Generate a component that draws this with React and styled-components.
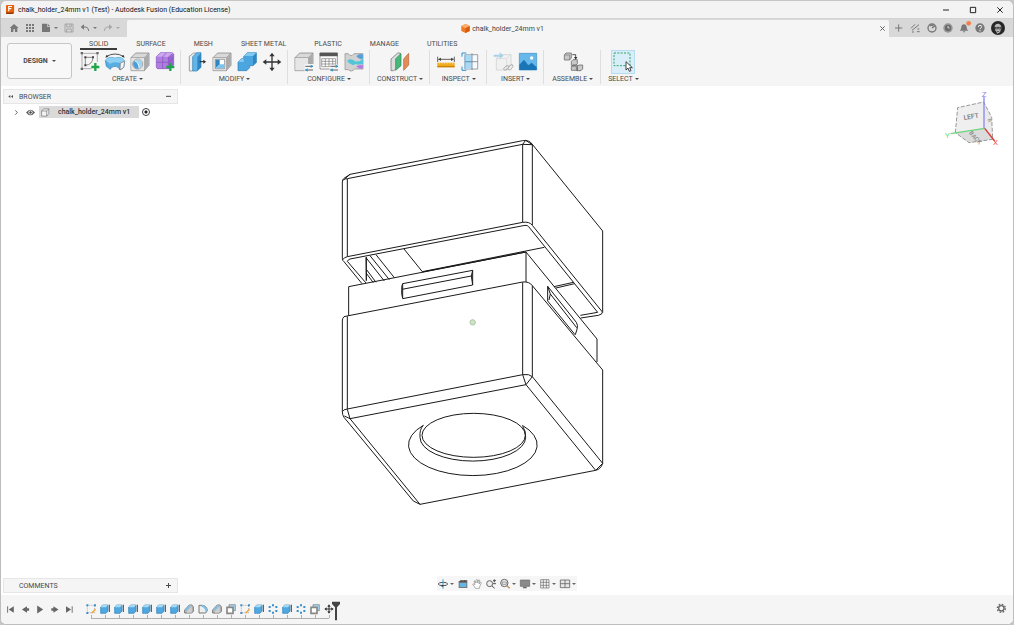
import React, { useState } from 'react';
import styled, { createGlobalStyle } from 'styled-components';

const GlobalStyle = createGlobalStyle`
    * { box-sizing:border-box; }
    body {
        margin:0;
        background-color:#c6c6c6;
        font-family:Roboto, "Liberation Sans", sans-serif;
        font-size:7px;
        line-height:10px;
        color:#4a4a4a;
    }
    button {
        display:flex;
        align-items:center;
        justify-content:center;
        margin:0;
        padding:0;
        border:0;
        background:none;
        font:inherit;
        color:inherit;
    }
    svg { display:block; flex:none; overflow:visible; }
`;

const Window = styled.div`
    display:flex;
    flex-direction:column;
    min-height:100vh;
    padding-top:1px;
    background-color:#c6c6c6;
`;
const Frame = styled.div`
    display:flex;
    flex:1;
    flex-direction:column;
    overflow:hidden;
    border:1px solid #bdbdbd;
    border-top:0;
    border-radius:6px;
    background-color:#fff;
`;
const TitleBar = styled.header`
    display:flex;
    align-items:center;
    height:18px;
    padding-left:5px;
    border-bottom:1px solid #d2d2d2;
    background-color:#f3f3f3;
`;
const WindowTitle = styled.h1`
    flex:1;
    margin:0 0 0 3px;
    font-size:7px;
    font-weight:400;
    line-height:10px;
    color:#111;
`;
const WindowButton = styled.button`
    width:27px;
    height:16px;
`;

const FileBar = styled.div`
    display:flex;
    height:18px;
    background-color:#d8d8d8;
`;
const QuickAccess = styled.nav`
    display:flex;
    align-items:center;
    gap:6px;
    width:126px;
    padding-left:8px;
    color:#777;
`;
const QuickButton = styled.button`
    gap:3px;
    height:16px;
    opacity:${({ $off }) => ($off ? 0.5 : 1)};
`;
const DocTab = styled.div`
    display:flex;
    flex:1;
    align-items:center;
    margin-top:1px;
    padding-right:3px;
    border-radius:2px 2px 0 0;
    background-color:#f5f5f5;
`;
const DocName = styled.div`
    display:flex;
    flex:1;
    align-items:center;
    justify-content:center;
    gap:2px;
    color:#444;
`;
const CloseTab = styled.button`
    width:8px;
    height:8px;
    color:#666;
`;
const Account = styled.div`
    display:flex;
    align-items:center;
    gap:6px;
    padding:0 8px 0 6px;
    color:#777;
`;

const Ribbon = styled.div`
    display:flex;
    height:49px;
    background-color:#f5f5f5;
`;
const Workspace = styled.button`
    gap:4px;
    width:65px;
    height:36px;
    margin:6px 2px 0 6px;
    border:1px solid #c6c6c6;
    border-radius:3px;
    background-color:#f8f8f8;
    font-weight:700;
`;
const RibbonMain = styled.div`
    display:flex;
    flex-direction:column;
`;
const Tabs = styled.div`
    display:flex;
    gap:10px;
    padding-left:6px;
`;
const Tab = styled.button`
    height:13px;
    padding:3px 9px 0;
    border-bottom:2px solid ${({ $active }) => ($active ? '#3c3c3c' : 'transparent')};
`;
const Groups = styled.div`
    display:flex;
`;
const Group = styled.section`
    display:flex;
    flex-direction:column;
    align-items:center;
    height:34px;
    min-width:57px;
    padding:0 5px 0 6px;
    border-right:1px solid #dedede;
    &:last-child {
        min-width:0;
        border-right:0;
    }
`;
const Tools = styled.div`
    display:flex;
    gap:5px;
`;
const Tool = styled.button`
    width:${({ $selected }) => ($selected ? 24 : 20)}px;
    height:24px;
    background-color:${({ $selected }) => ($selected ? '#d9eef8' : 'transparent')};
    outline:${({ $selected }) => ($selected ? '1px solid #b5dcf0' : 'none')};
    outline-offset:-1px;
`;
const GroupLabel = styled.button`
    gap:2px;
    height:10px;
    padding:0 1px;
    white-space:nowrap;
`;
const Caret = styled.span`
    border:2px solid transparent;
    border-top-color:currentColor;
    border-bottom:0;
`;

/* every layer of the canvas shares the one grid cell */
const Canvas = styled.main`
    display:grid;
    flex:1;
    grid-template:minmax(0, 1fr) / minmax(0, 1fr);
    background-color:#fff;
    > * { grid-area:1 / 1; }
`;
const ModelLayer = styled.div`
    display:flex;
    align-items:flex-start;
    justify-content:center;
    padding:44px 64px 0 0;
`;
const CubeLayer = styled.div`
    align-self:start;
    justify-self:end;
`;
const Browser = styled.aside`
    align-self:start;
    width:175px;
    margin:3px 0 0 2px;
`;
const PanelHead = styled.div`
    display:flex;
    align-items:center;
    height:15px;
    padding:0 6px 0 3px;
    border:1px solid #e6e6e6;
    background-color:#f5f5f5;
`;
const PanelTitle = styled.h2`
    flex:1;
    margin:0 0 0 6px;
    font-size:7px;
    font-weight:400;
    line-height:10px;
`;
const PanelButton = styled.button`
    width:6px;
    height:10px;
`;
const TreeRow = styled.div`
    display:flex;
    align-items:center;
    height:12px;
    margin-top:2px;
    padding-left:10px;
`;
const TreeButton = styled.button`
    width:6px;
    height:10px;
    margin-right:6px;
`;
const EyeButton = styled.button`
    width:10px;
    height:10px;
    margin-right:4px;
`;
const NodeLabel = styled.label`
    display:flex;
    align-items:center;
    gap:8px;
    height:12px;
    padding:0 9px 0 2px;
    background-color:#dadada;
    font-weight:500;
    color:#333;
`;
const NodeRadio = styled.input`
    appearance:none;
    width:8px;
    height:8px;
    margin:0 0 0 3px;
    border:1px solid #444;
    border-radius:50%;
    background:radial-gradient(#222 0 1px, #fff 2px);
`;
const Comments = styled.aside`
    align-self:end;
    width:175px;
    margin:0 0 2px 2px;
`;
const NavBar = styled.nav`
    display:flex;
    align-items:center;
    align-self:end;
    justify-self:center;
    gap:4px;
    height:15px;
    margin-bottom:4px;
    padding:0 1px;
    background-color:#f6f6f6;
    color:#666;
`;
const NavButton = styled.button`
    gap:2px;
    height:13px;
`;

const Timeline = styled.footer`
    display:flex;
    align-items:flex-start;
    height:29px;
    padding:8px 6px 0 4px;
    background-color:#f5f5f5;
`;
const Player = styled.div`
    display:flex;
    gap:5px;
    color:#666;
`;
const PlayerButton = styled.button`
    width:10px;
    height:12px;
`;
const History = styled.div`
    display:flex;
    flex:1;
    padding-left:9px;
`;
const Steps = styled.ol`
    display:flex;
    flex-wrap:wrap;
    width:252px;
    margin:0 -4px 0 0;
    padding:0;
    list-style:none;
    &::after {
        content:"";
        width:100%;
        height:1px;
        margin:0 7px;
        background-color:#b0b0b0;
    }
`;
const Step = styled.li`
    display:flex;
    flex-direction:column;
    align-items:center;
    width:14px;
    &::after {
        content:"";
        width:1px;
        height:3px;
        background-color:#b0b0b0;
    }
`;
const StepButton = styled.button`
    width:12px;
    height:12px;
`;

const Art = ({ size = 20, box = 60, children, ...rest }) => (
    <svg width={size} height={size} viewBox={`0 0 ${box} ${box}`} fill="none" aria-hidden="true" {...rest}>
        {children}
    </svg>
);

const GreenPlus = () => <path d="M46 33v24M34 45h24" stroke="#21a54a" strokeWidth="7" />;
const GreyCube = () => (
    <>
        <path d="M3 17 17 3h40v37L43 56H3z" fill="#d9d9d9" stroke="#777" strokeWidth="2" strokeLinejoin="round" />
        <path d="M3 17h40v39M43 17 57 3" stroke="#8c8c8c" strokeWidth="2" />
        <path d="M44 18 56 6v34L44 54z" fill="#aaa" />
        <path d="M4 18h38v37H4z" fill="#e6e6e6" />
    </>
);

const toolArt = {
    sketch: (
        <>
            <path d="M6 4h46M6 4v46h28M52 4v26" stroke="#888" strokeWidth="2" />
            <path d="M2 0h7v7H2zM49 0h7v7h-7zM2 47h7v7H2z" fill="#666" />
            <path d="M16 16h23Q38 38 16 40z" stroke="#555" strokeWidth="2" />
            <path d="M13 13h6v6h-6zM36 13h6v6h-6zM13 37h6v6h-6z" fill="#444" />
            <GreenPlus />
        </>
    ),
    revolve: (
        <>
            <path d="M5 13Q30-1 55 13" stroke="#333" strokeWidth="2.5" />
            <path d="m1 17 4-9 5 6zM59 17l-9-3 5-6z" fill="#333" />
            <path d="M1 25q6-9 18-9 11 5 23 0 14 2 17 11l-3 19-11 8-5-8q-10-6-20 0l-4 6-12-9z" fill="#58aee2" stroke="#2a7fb8" strokeWidth="2" strokeLinejoin="round" />
            <path d="M1 25q6-9 18-9 11 5 23 0 14 2 17 11l-13 6q-16-5-31 2z" fill="#8dd0f4" />
            <path d="m46 33 13-5-3 18-11 8z" fill="#f5f5f5" stroke="#777" strokeWidth="2" />
        </>
    ),
    hole: (
        <>
            <GreyCube />
            <circle cx="23" cy="36" r="15" fill="#fff" stroke="#777" strokeWidth="2" />
            <path d="M12 27q13 2 14 23-14 2-17-14 0-5 3-9z" fill="#4a9fd8" />
            <path d="M13 27q14 1 16 22 8-5 8-14-2-13-15-12-6 1-9 4z" fill="#9fd5f3" />
        </>
    ),
    form: (
        <>
            <path d="M4 14 16 2h36l4 5v32L43 50H7l-3-5z" fill="#9a63d2" stroke="#8450bd" strokeWidth="2" strokeLinejoin="round" />
            <path d="M4 14 16 2h36l3 4-14 9z" fill="#cba5ef" />
            <path d="M5 15h35v34H7l-2-4z" fill="#ae7fde" />
            <path d="M5 31h35l15-14M23 15v34M23 15 34 2M40 15v34M40 15 54 4" stroke="#8450bd" strokeWidth="2" />
            <GreenPlus />
        </>
    ),
    press: (
        <>
            <path d="M7 13 20 3h8v42L16 57H7z" fill="#eee" stroke="#777" strokeWidth="2" />
            <path d="M17 14 29 2h13v44L30 57H17z" fill="#62b5e6" stroke="#2a7fb8" strokeWidth="2" />
            <path d="M31 15 42 3v43L31 56z" fill="#2f87c1" />
            <path d="M38 29h12" stroke="#222" strokeWidth="3" />
            <path d="m49 23 8 6-8 6z" fill="#222" />
        </>
    ),
    shell: (
        <>
            <GreyCube />
            <path d="M10 22h28v28H10z" fill="#fff" stroke="#777" strokeWidth="2" />
            <path d="M11 23h12v14l-12 12z" fill="#2f87c1" />
            <path d="M23 37h14v12H11z" fill="#7cc4ee" />
        </>
    ),
    combine: (
        <>
            <path d="m20 13 11-11h27v29l-10 10H38v6l-9 9H3V30l10-10h7z" fill="#4ba5de" stroke="#2a7fb8" strokeWidth="2" />
            <path d="m20 13 11-11h27L48 12H21zM3 30l10-10h7v10z" fill="#83caf1" />
            <path d="M48 13 58 3v28L48 41z" fill="#2f87c1" />
        </>
    ),
    move: (
        <>
            <path d="M30 7v46M7 30h46" stroke="#333" strokeWidth="4" />
            <path d="m30 2 8 11H22zM30 58l8-11H22zM2 30l11-8v16zM58 30l-11-8v16z" fill="#333" />
        </>
    ),
    configure: (
        <>
            <GreyCube />
            <path d="M32 36h28v24H32z" fill="#f5f5f5" />
            <path d="M34 43h23M34 54h23" stroke="#444" strokeWidth="2.5" />
            <path d="m50 38 8 5-8 5zM41 49l-8 5 8 5z" fill="#2496c9" />
        </>
    ),
    table: (
        <>
            <path d="M3 3h52v48H3z" fill="#fff" stroke="#666" strokeWidth="2" />
            <path d="M2 2h54v11H2z" fill="#555" />
            <path d="M8 20h42v24H8zM8 28h42M8 36h42M19 20v24M30 20v24M41 20v24" stroke="#777" strokeWidth="2" />
            <path d="M32 38h28v22H32z" fill="#f5f5f5" />
            <path d="M34 43h23M34 54h23" stroke="#444" strokeWidth="2.5" />
            <path d="m50 38 8 5-8 5zM41 49l-8 5 8 5z" fill="#2496c9" />
        </>
    ),
    texture: (
        <>
            <path d="M3 5h10q8 12 17 0h27v46H32q-10 11-19 2H3z" fill="#d2d2d2" stroke="#888" strokeWidth="2" />
            <path d="M37 13q10-11 20-5v11q-9 7-20-6z" fill="#5a9fd8" />
            <path d="M10 25q12-8 23 3 12 3 24-8v16q-15 3-24 0-5 7-12 0-9-1-11-11z" fill="#54c5d8" />
            <path d="M37 43q10-6 20-3v9q-13 4-20-6z" fill="#b57be0" />
        </>
    ),
    construct: (
        <>
            <path d="M3 21 23 3h8v38L11 56H3z" fill="#ddd" stroke="#666" strokeWidth="2" />
            <path d="M17 20 33 5v36L17 55z" fill="#48b779" stroke="#258952" strokeWidth="2" />
            <path d="M41 21 56 4v35L41 55z" fill="#e58a58" stroke="#b96235" strokeWidth="2" />
        </>
    ),
    measure: (
        <>
            <path d="M5 14v16M55 14v16M8 22h44" stroke="#444" strokeWidth="2.5" />
            <path d="m6 22 9-5v10zM54 22l-9-5v10z" fill="#444" />
            <path d="M4 32h52v14H4z" fill="#efa91d" />
            <path d="M4 42h52v4H4z" fill="#c78208" />
            <path d="M10 33v4M18 33v4M26 33v4M34 33v4M42 33v4M50 33v4" stroke="#ffe09a" strokeWidth="2" />
        </>
    ),
    section: (
        <>
            <path d="M12 8h38v43H12z" fill="#f4faff" stroke="#777" strokeWidth="2" />
            <path d="M12 8h20v43H12z" fill="#a8d8f5" />
            <path d="M12 29h38M33 4v50" stroke="#666" strokeWidth="2" />
            <path d="M3 14V3h13M3 44v11h13" stroke="#2d8dcb" strokeWidth="3" />
            <path d="M12 8v43M12 29h20" stroke="#55a7db" strokeWidth="2" />
        </>
    ),
    derive: (
        <g opacity="0.45">
            <path d="M10 20 22 8h32v32L42 54H10z" fill="#eee" stroke="#999" strokeWidth="2" />
            <path d="M10 20h31v33M41 20 53 8" stroke="#aaa" strokeWidth="2" />
            <path d="M2 8h18V1l12 10-12 10v-7H2z" fill="#4da9d8" />
            <path d="M36 45q6-8 12-2l-5 9q-9 5-12-1l5-6zM46 47l6-8q8-4 8 4l-7 10q-7 3-7-2" stroke="#555" strokeWidth="3" />
        </g>
    ),
    image: (
        <>
            <path d="M4 4h52v50H4z" fill="#65b8e9" stroke="#3a8ec5" strokeWidth="2" />
            <circle cx="41" cy="18" r="5" fill="#fff" />
            <path d="M4 54V38l14-15 13 17 10-8 15 14v8z" fill="#1975b5" />
        </>
    ),
    assemble: (
        <>
            <path d="m4 9 5-6h16v15l-5 6H4zM25 28l5-5h13v12l-5 5H25zM25 44l5-5h13v16H25zM42 44l5-5h12v12l-5 5H42z" fill="#c9c9c9" stroke="#555" strokeWidth="2" />
            <path d="M4 9h16v15M25 44h15v12" stroke="#777" strokeWidth="2" />
            <path d="M28 8h10v9" stroke="#333" strokeWidth="2.5" />
            <path d="m33 15 5 8 5-8z" fill="#333" />
        </>
    ),
    select: (
        <>
            <path d="M3 3h48v38H3z" stroke="#2fa36a" strokeWidth="3" strokeDasharray="6 4" />
            <path d="M39 29v25l6-6 4 10 5-2-4-9h8z" fill="#fff" stroke="#222" strokeWidth="2.5" />
        </>
    ),
};

const groups = [
    { name: 'CREATE', tools: ['sketch', 'revolve', 'hole', 'form'] },
    { name: 'MODIFY', tools: ['press', 'shell', 'combine', 'move'] },
    { name: 'CONFIGURE', tools: ['configure', 'table', 'texture'] },
    { name: 'CONSTRUCT', tools: ['construct'] },
    { name: 'INSPECT', tools: ['measure', 'section'] },
    { name: 'INSERT', tools: ['derive', 'image'] },
    { name: 'ASSEMBLE', tools: ['assemble'] },
    { name: 'SELECT', tools: ['select'] },
];
const tabs = ['SOLID', 'SURFACE', 'MESH', 'SHEET METAL', 'PLASTIC', 'MANAGE', 'UTILITIES'];

const quick = [
    { name: 'Home', art: <path d="M15 3 2 15h4v12h7v-8h5v8h7V15h4z" fill="currentColor" /> },
    { name: 'Data panel', art: <path d="M3 3h6v6H3zM12 3h6v6h-6zM21 3h6v6h-6zM3 12h6v6H3zM12 12h6v6h-6zM21 12h6v6h-6zM3 21h6v6H3zM12 21h6v6h-6zM21 21h6v6h-6z" fill="currentColor" /> },
    { name: 'File', caret: true, art: <path d="M3 2h15v9h9v16H3zM20 2l7 7h-7z" fill="currentColor" /> },
    { name: 'Save', off: true, art: <path d="M3 3h24v24H3zM8 3v9h14V3M8 27v-9h14v9M17 5v5" stroke="currentColor" strokeWidth="3" /> },
    { name: 'Undo', caret: true, art: <><path d="M8 12h10q8 2 8 12" stroke="currentColor" strokeWidth="3" /><path d="m2 12 10-8v16z" fill="currentColor" /></> },
    { name: 'Redo', caret: true, off: true, art: <><path d="M22 12H12Q4 14 4 24" stroke="currentColor" strokeWidth="3" /><path d="M28 12 18 4v16z" fill="currentColor" /></> },
];

const accountItems = [
    { name: 'New design', art: <path d="M11 4v22M0 15h22" stroke="currentColor" strokeWidth="3" /> },
    { name: 'Extensions', art: <path d="M0 16 12 4M3 22 24 5M3 27h6M19 18h6M18 26h8" stroke="currentColor" strokeWidth="3" /> },
    { name: 'Updates', art: <><circle cx="15" cy="15" r="12" stroke="currentColor" strokeWidth="4" /><path d="M15 15 24 8M9 9q5-5 10 0" stroke="currentColor" strokeWidth="4" /></> },
    { name: 'Job status', art: <><circle cx="15" cy="15" r="14" fill="currentColor" opacity="0.7" /><circle cx="15" cy="15" r="9" fill="#666" /><path d="M15 9v6h5" stroke="#d8d8d8" strokeWidth="3" /></> },
    { name: 'Notifications', art: <><path d="M2 23q5-3 5-10 0-8 8-9 8 1 8 9 0 7 5 10zM11 25h8l-4 4z" fill="currentColor" /><circle cx="29" cy="1" r="7" fill="#f58149" /></> },
    { name: 'Help', art: <><circle cx="15" cy="15" r="14" fill="currentColor" /><path d="M10 12q0-5 5-5t5 4q0 3-5 6v2M15 21v4" stroke="#eee" strokeWidth="3" /></> },
];

const navItems = [
    { name: 'Orbit', caret: true, art: <><ellipse cx="15" cy="15" rx="14" ry="5" stroke="#555" strokeWidth="3" /><path d="M15 1v28" stroke="#389bd4" strokeWidth="3" /><path d="m11 17 7 3-7 4z" fill="#333" /></> },
    { name: 'Look at', art: <><path d="M2 8 9 3h19v24H2z" fill="#777" /><path d="M5 12h20v12H5z" fill="#62b8e5" /><path d="M2 8h25M9 3v5M20 3v5" stroke="#444" strokeWidth="2" /></> },
    { name: 'Pan', art: <path d="M10 28q-3-6-8-12 2-3 7 1L6 6q3-3 6 6V3q3-3 5 0v9l3-9q4-1 3 3l-2 9 5-6q3 1 1 5-3 4-5 14z" fill="#fff" stroke="#888" strokeWidth="2" /> },
    { name: 'Zoom', art: <><circle cx="11" cy="14" r="9" fill="#eee" stroke="#666" strokeWidth="3" /><path d="m18 21 8 7M25 1v9M21 5h9M21 14h9" stroke="#555" strokeWidth="3" /></> },
    { name: 'Fit', caret: true, art: <><circle cx="13" cy="12" r="11" fill="#eee" stroke="#666" strokeWidth="3" /><path d="M7 9h12v7H7z" stroke="#777" strokeWidth="2" /><path d="m21 20 8 8" stroke="#c58948" strokeWidth="4" /></> },
    { name: 'Display settings', caret: true, art: <><path d="M1 3h28v19H1z" fill="#8a8a8a" stroke="#666" strokeWidth="2" /><path d="M10 23h10v5H8z" fill="#666" /></> },
    { name: 'Grid and snaps', caret: true, art: <path d="M2 2h25v25H2zM10 2v25M19 2v25M2 10h25M2 19h25" stroke="#666" strokeWidth="2" /> },
    { name: 'Viewports', caret: true, art: <path d="M1 3h28v23H1zM15 3v23M1 14h28" fill="#e6e6e6" stroke="#666" strokeWidth="2.5" /> },
];

const player = [
    { name: 'Go to start', art: <path d="M4 4h3v22H4zM26 4v22L9 15z" fill="currentColor" /> },
    { name: 'Step back', art: <path d="M20 4v22L3 15zM20 11h7v8h-7z" fill="currentColor" /> },
    { name: 'Play', art: <path d="M4 2v26l20-13z" fill="currentColor" /> },
    { name: 'Step forward', art: <path d="M8 4v22l17-11zM1 11h7v8H1z" fill="currentColor" /> },
    { name: 'Go to end', art: <path d="M19 4h3v22h-3zM0 4v22l17-11z" fill="currentColor" /> },
];

const stepArt = {
    sketch: <><path d="M4 4h22v22H4z" stroke="#888" strokeWidth="2" strokeDasharray="3 3" /><path d="M1 1h6v6H1zM24 1h6v6h-6zM1 24h6v6H1z" fill="#3e91c8" /><path d="m15 26 12-12 3 3-12 12z" fill="#efa33a" /></>,
    extrude: <><path d="m2 10 6-7h16v18l-6 7H2z" fill="#4fa8df" stroke="#2a7fb8" strokeWidth="2" /><path d="m2 10 6-7h16l-6 7z" fill="#a5d9f5" /><path d="M28 2v22" stroke="#444" strokeWidth="3" /></>,
    chamfer: <><path d="M2 18 16 3h7l5 5v14l-5 5H2z" fill="#bbb" stroke="#777" strokeWidth="3" strokeLinejoin="round" /><path d="M3 17 16 3h6L8 20z" fill="#7dc0e8" /><path d="M9 21 23 8v18H9z" fill="#cfcfcf" /></>,
    fillet: <><path d="M3 27V4h10q14 2 15 16l-5 7z" fill="#eee" stroke="#777" strokeWidth="3" strokeLinejoin="round" /><path d="M12 3q14 2 16 17l-5 5Q21 10 8 7z" fill="#7dc0e8" /></>,
    shell: <><path d="M9 9V2h19v18h-7" fill="#a9d7f1" stroke="#777" strokeWidth="2" /><path d="M3 10h18v18H3z" fill="#fff" stroke="#888" strokeWidth="5" /></>,
    pattern: <path d="M12 1h6v6h-6zM22 6h6v6h-6zM22 18h6v6h-6zM12 23h6v6h-6zM2 18h6v6H2zM2 6h6v6H2z" fill="#398fc9" />,
    move: <><path d="M15 4v22M4 15h22" stroke="#333" strokeWidth="3" /><path d="m15 1 5 7H10zM15 29l5-7H10zM1 15l7-5v10zM29 15l-7-5v10z" fill="#333" /></>,
};
const steps = [
    'sketch', 'extrude', 'extrude', 'extrude', 'extrude', 'extrude', 'extrude', 'chamfer', 'fillet',
    'chamfer', 'shell', 'sketch', 'extrude', 'pattern', 'extrude', 'pattern', 'shell', 'move',
];

function Model() {
    return (
        <svg width="290" height="380" viewBox="0 0 870 1140" fill="none" stroke="#1a1a1a" strokeWidth="3" strokeLinejoin="round" role="img" aria-label="Chalk holder model">
            {/* cap */}
            <path d="M37 385V156q0-8 5-11l18-12L578 32q20-3 29 11l211 260v242q-1 9-13 11l-53 8" />
            <path d="M39 150q7-4 13-4L578 43l29 1M578 43l9-12 20 13M45 146l15-13" />
            <path d="M52 147v233M578 42v235M607 43v242" />
            <path d="M37 390q5-8 15-10l526-103q20-3 29 9l211 261M37 385q0 7 5 10l54 66" />
            <path d="m108 459-56-65q3-6 8-7l525-101q8 0 11 4l207 257-52 9M222 357l55 68 366-73" />
            <path d="m277 426 311-60M672 470l58-13M678 474l56-13" />
            <path d="M109 381v71l-1-69 55 70M120 377l58 72M138 374l55 69M109 418l29 39M109 430l21 28" />
            {/* neck */}
            <path d="M56 557v-87l532-104v90M588 366l213 261v69" />
            <path d="m218 461 210-40v44l-210 41q-4-14-3-28 0-12 3-17zM216 478l208-40 4-17M424 438l4 27M218 461v43" />
            <path d="M653 513v-44l86 108q6 9 2 21l-5 16M653 469l8 23 79 101M661 492l-4 18M653 513l82 101" />
            {/* body */}
            <path d="M37 845V573q0-9 5-13l14-3 522-101q20-2 29 11l211 253v280" />
            <path d="M52 559v279M578 457v277M607 467v273" />
            <path d="M37 845q3-7 15-8l526-103q20-3 29 6l211 260q-2 11-13 18l-8 3-527 102-20-10L42 862q-5-7-5-17z" />
            <path d="m43 858 17 8 528-102 209 257 21-21M588 764l-10-30M588 764l19-24M52 838l8 28 210 257" />
            {/* bore */}
            <ellipse cx="431" cy="916" rx="155" ry="66" />
            <path d="M280 886A193 92 0 1 0 577 886" />
            <path d="M280 886q-12 12-10 36a158 71 0 0 0 317 0q1-20-9-33" />
            <circle cx="428" cy="577" r="8" fill="#cfe3c9" stroke="#a9c5a3" />
        </svg>
    );
}

function ViewCube() {
    return (
        <svg width="84" height="65" viewBox="0 3 252 195" fill="none" fontSize="24" role="img" aria-label="View cube">
            <path d="m86 68 78-17 24 46 3 66-71 10-41-30z" fill="#eaeaea" />
            <path d="M86 68 164 51l3 79-88 13z" fill="#efefef" />
            <path d="m79 143 88-13 24 33-71 10z" fill="#dcdcdc" />
            <path d="M79 143l7-75 78-17 24 46 3 66-71 10-41-30" stroke="#999" strokeWidth="3" strokeDasharray="12 5" />
            <path d="M165 130V35" stroke="#8b87ee" strokeWidth="4" />
            <path d="m65 146 102-16" stroke="#6bd67c" strokeWidth="4" />
            <path d="m167 130 30 38" stroke="#d33" strokeWidth="4" />
            <text x="105" y="105" fontSize="20" fontWeight="500" fill="#777" transform="rotate(-9 105 105)">LEFT</text>
            <text x="119" y="145" fontSize="18" fontWeight="500" fill="#888" transform="rotate(48 119 145)">BACK</text>
            <text x="175" y="104" fontSize="15" fill="#777" transform="rotate(65 175 104)">R</text>
            <text x="158" y="36" fill="#8b87ee">Z</text>
            <text x="48" y="158" fill="#6be07c">Y</text>
            <text x="192" y="180" fill="#e55">X</text>
        </svg>
    );
}

function App() {
    const [activeTab, setActiveTab] = useState('SOLID');

    return (
        <Window>
            <GlobalStyle />
            <Frame>
                <TitleBar>
                    <Art size={9} box={30}>
                        <path d="M0 3q0-3 3-3h24v25l-4 5H3q-3 0-3-3z" fill="#e7610a" />
                        <path d="M0 25h27l-4 5H3q-3 0-3-5z" fill="#8f3705" />
                        <path d="M9 21V5h11M9 12h9" stroke="#fff" strokeWidth="4" />
                    </Art>
                    <WindowTitle>chalk_holder_24mm v1 (Test) - Autodesk Fusion (Education License)</WindowTitle>
                    <WindowButton aria-label="Minimize"><Art size={6} box={18}><path d="M0 9h18" stroke="#222" strokeWidth="3" /></Art></WindowButton>
                    <WindowButton aria-label="Maximize"><Art size={6} box={18}><path d="M1 1h16v16H1z" stroke="#222" strokeWidth="3" /></Art></WindowButton>
                    <WindowButton aria-label="Close"><Art size={6} box={18}><path d="m1 1 16 16M17 1 1 17" stroke="#222" strokeWidth="3" /></Art></WindowButton>
                </TitleBar>

                <FileBar>
                    <QuickAccess>
                        {quick.map(({ name, art, caret, off }) => (
                            <QuickButton key={name} aria-label={name} $off={off}>
                                <Art size={10} box={30}>{art}</Art>
                                {caret && <Caret />}
                            </QuickButton>
                        ))}
                    </QuickAccess>
                    <DocTab>
                        <DocName>
                            <Art size={9} box={30}>
                                <path d="m15 0 14 7v16l-14 7-14-7V7z" fill="#f07a25" />
                                <path d="m15 0 14 7-14 7L1 7z" fill="#ffad6b" />
                                <path d="M15 14v16l14-7V7z" fill="#d95c0c" />
                            </Art>
                            chalk_holder_24mm v1
                        </DocName>
                        <CloseTab aria-label="Close tab"><Art size={5} box={15}><path d="m1 1 13 13M14 1 1 14" stroke="currentColor" strokeWidth="3" /></Art></CloseTab>
                    </DocTab>
                    <Account>
                        {accountItems.map(({ name, art }) => (
                            <button key={name} aria-label={name}><Art size={10} box={30}>{art}</Art></button>
                        ))}
                        <button aria-label="Profile">
                            <Art size={14} box={42}>
                                <circle cx="21" cy="21" r="21" fill="#262626" />
                                <path d="M11 16q2-9 12-8 9 3 8 14l-4 12-8 4-6-10z" fill="#bbb" />
                                <path d="M11 19h20M14 19v5h6v-5M23 19v5h6v-5M17 31q5 3 8-1" stroke="#222" strokeWidth="2" />
                            </Art>
                        </button>
                    </Account>
                </FileBar>

                <Ribbon>
                    <Workspace>DESIGN <Caret /></Workspace>
                    <RibbonMain>
                        <Tabs role="tablist">
                            {tabs.map((tab) => (
                                <Tab key={tab} role="tab" aria-selected={tab === activeTab} $active={tab === activeTab} onClick={() => setActiveTab(tab)}>
                                    {tab}
                                </Tab>
                            ))}
                        </Tabs>
                        <Groups>
                            {groups.map(({ name, tools }) => (
                                <Group key={name}>
                                    <Tools>
                                        {tools.map((tool) => (
                                            <Tool key={tool} aria-label={tool} $selected={tool === 'select'}>
                                                <Art>{toolArt[tool]}</Art>
                                            </Tool>
                                        ))}
                                    </Tools>
                                    <GroupLabel>{name} <Caret /></GroupLabel>
                                </Group>
                            ))}
                        </Groups>
                    </RibbonMain>
                </Ribbon>

                <Canvas>
                    <ModelLayer><Model /></ModelLayer>
                    <CubeLayer><ViewCube /></CubeLayer>
                    <Browser>
                        <PanelHead>
                            <PanelButton aria-label="Collapse browser"><Art size={5} box={15}><path d="M7 3v9L1 7.5zM15 3v9L9 7.5z" fill="currentColor" /></Art></PanelButton>
                            <PanelTitle>BROWSER</PanelTitle>
                            <PanelButton aria-label="Minimize browser"><Art size={5} box={15}><path d="M0 7h15" stroke="currentColor" strokeWidth="3" /></Art></PanelButton>
                        </PanelHead>
                        <TreeRow>
                            <TreeButton aria-label="Expand"><Art size={5} box={15}><path d="m4 1 6 6.5L4 14" stroke="currentColor" strokeWidth="2.5" /></Art></TreeButton>
                            <EyeButton aria-label="Toggle visibility">
                                <Art size={9} box={30}>
                                    <path d="M0 15Q15-4 30 15 15 34 0 15z" fill="#5c5c5c" />
                                    <circle cx="15" cy="15" r="7" fill="#fff" />
                                    <circle cx="15" cy="15" r="4" fill="#444" />
                                </Art>
                            </EyeButton>
                            <NodeLabel htmlFor="active-node">
                                <Art size={9} box={30}><path d="M2 10 9 3h17v16l-7 8H2zM2 10h17v17M19 10l7-7" fill="#f4f4f4" stroke="#666" strokeWidth="2" /></Art>
                                chalk_holder_24mm v1
                            </NodeLabel>
                            <NodeRadio id="active-node" type="radio" name="active" defaultChecked />
                        </TreeRow>
                    </Browser>
                    <Comments>
                        <PanelHead>
                            <PanelButton as="span" />
                            <PanelTitle>COMMENTS</PanelTitle>
                            <PanelButton aria-label="Add comment"><Art size={5} box={15}><path d="M0 7.5h15M7.5 0v15" stroke="currentColor" strokeWidth="3" /></Art></PanelButton>
                        </PanelHead>
                    </Comments>
                    <NavBar>
                        {navItems.map(({ name, art, caret }) => (
                            <NavButton key={name} aria-label={name}>
                                <Art size={10} box={30}>{art}</Art>
                                {caret && <Caret />}
                            </NavButton>
                        ))}
                    </NavBar>
                </Canvas>

                <Timeline>
                    <Player>
                        {player.map(({ name, art }) => (
                            <PlayerButton key={name} aria-label={name}><Art size={9} box={30}>{art}</Art></PlayerButton>
                        ))}
                    </Player>
                    <History>
                        <Steps>
                            {steps.map((step, i) => (
                                <Step key={i}>
                                    <StepButton aria-label={step}><Art size={10} box={30}>{stepArt[step]}</Art></StepButton>
                                </Step>
                            ))}
                        </Steps>
                        <Art size={8} box={24}><path d="M0-4h24v7L15 13v39H9V13L0 3z" fill="#444" /></Art>
                    </History>
                    <button aria-label="Settings">
                        <Art size={11} box={33}>
                            <circle cx="16" cy="16" r="8" stroke="#666" strokeWidth="4" />
                            <circle cx="16" cy="16" r="12" stroke="#666" strokeWidth="4" strokeDasharray="5 4.4" />
                        </Art>
                    </button>
                </Timeline>
            </Frame>
        </Window>
    );
}

export default App;
